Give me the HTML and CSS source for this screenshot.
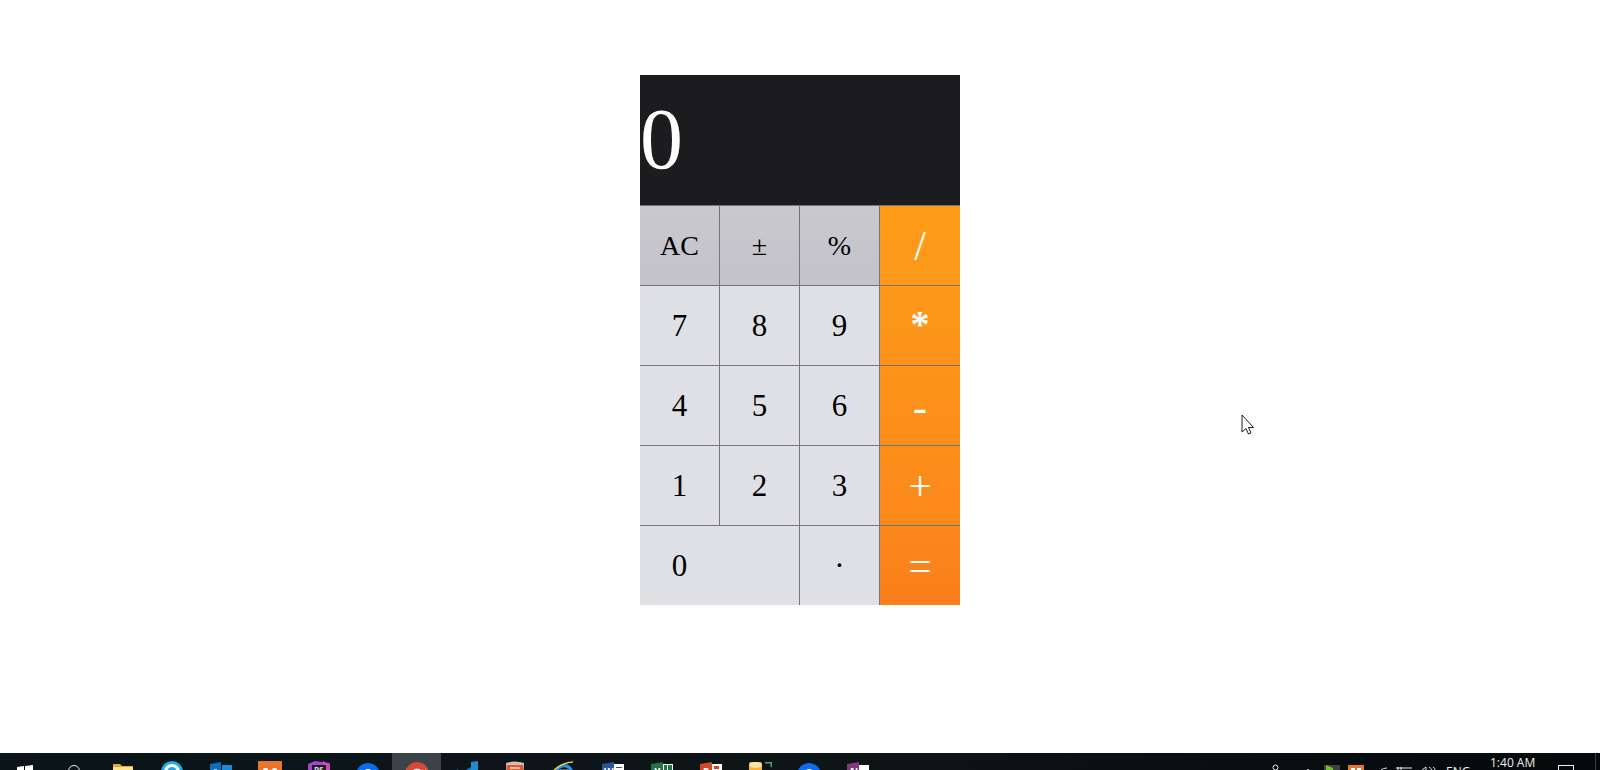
FILE: index.html
```html
<!DOCTYPE html>
<html>

<head>
    <link rel="stylesheet" href="styles.css">
</head>

<body>
    <div class="page">
        <div class="calculator">
            <div class="display">0</div>
            <div class="keys">
                <button class="key fn">AC</button>
                <button class="key fn">±</button>
                <button class="key fn">%</button>
                <button class="key op op-1">/</button>
                <button class="key">7</button>
                <button class="key">8</button>
                <button class="key">9</button>
                <button class="key op op-2">*</button>
                <button class="key">4</button>
                <button class="key">5</button>
                <button class="key">6</button>
                <button class="key op op-3">-</button>
                <button class="key">1</button>
                <button class="key">2</button>
                <button class="key">3</button>
                <button class="key op op-4">+</button>
                <button class="key zero">0</button>
                <button class="key">·</button>
                <button class="key op op-5">=</button>
            </div>
        </div>
        <svg class="cursor" width="14" height="22" viewBox="0 0 14 22">
            <path d="M1 1V18L5 14.500L7.500 20L10 19L7.500 13.500H12.500Z" fill="#fff" stroke="#1a1a2a"/>
        </svg>
    </div>

    <div class="taskbar">
        <div class="slot">
            <svg width="24" height="24" viewBox="0 0 24 24">
                <path d="M4 6L11 5V24H4zM12 5L20 4V24H12z" fill="#fff"/>
            </svg>
        </div>
        <div class="slot">
            <svg width="24" height="24" viewBox="0 0 24 24">
                <circle cx="12" cy="10" r="5.500" fill="none" stroke="#eee"/>
            </svg>
        </div>
        <div class="slot">
            <svg width="24" height="24" viewBox="0 0 24 24">
                <path d="M2 3H9L11 5H22V24H2z" fill="#d9a93c"/>
                <path d="M2 6H22V24H2z" fill="#fde38c"/>
            </svg>
        </div>
        <div class="slot">
            <svg width="24" height="24" viewBox="0 0 24 24">
                <circle cx="12" cy="11" r="11" fill="#16b1ee"/>
                <circle cx="12" cy="11" r="8" fill="#fff"/>
                <circle cx="12" cy="11" r="5" fill="#2a9fd8"/>
            </svg>
        </div>
        <div class="slot">
            <svg width="24" height="24" viewBox="0 0 24 24">
                <path d="M13 4H23V24H13z" fill="#1c8ad6"/>
                <path d="M1 3L12 1V24L1 22z" fill="#0a6fc0"/>
                <circle cx="6.500" cy="11" r="2.500" fill="none" stroke="#fff"/>
            </svg>
        </div>
        <div class="slot">
            <svg width="24" height="24" viewBox="0 0 24 24">
                <rect y="0" width="24" height="24" rx="1" fill="#e9752d"/>
                <circle cx="7.500" cy="10" r="3" fill="#fff"/>
                <circle cx="16.500" cy="10" r="3" fill="#fff"/>
                <circle cx="7.500" cy="10" r="1" fill="#e9752d"/>
                <circle cx="16.500" cy="10" r="1" fill="#e9752d"/>
            </svg>
        </div>
        <div class="slot">
            <svg width="24" height="24" viewBox="0 0 24 24">
                <path d="M1 3L8 0L23 2V24H1z" fill="#a73fd0"/>
                <path d="M16 0L23 4V12H16z" fill="#d24bb5"/>
                <rect x="5" y="4" width="14" height="16" fill="#1d1d1f"/>
                <text class="icon-text" x="7" y="11.500">PS</text>
            </svg>
        </div>
        <div class="slot">
            <svg width="24" height="24" viewBox="0 0 24 24">
                <circle cx="12" cy="14" r="12" fill="#0a6cf0"/>
                <circle cx="12" cy="12" r="4" fill="#fff"/>
            </svg>
        </div>
        <div class="slot active">
            <svg width="24" height="24" viewBox="0 0 24 24">
                <circle cx="12" cy="13" r="12" fill="#d8483a"/>
                <path d="M1 18L3 8L8 12z" fill="#3fa34d"/>
                <path d="M23 18L21 8L16 12z" fill="#f6c22d"/>
                <circle cx="12" cy="13" r="5.500" fill="#fff"/>
                <circle cx="12" cy="13" r="4.500" fill="#4a8cf0"/>
            </svg>
        </div>
        <div class="slot">
            <svg width="24" height="24" viewBox="0 0 24 24">
                <path d="M17 1L24 0V24H17z" fill="#1f8ad2"/>
                <path d="M17 6V10L8 16L1 11L3 8L8 11z" fill="#1a76b8"/>
            </svg>
        </div>
        <div class="slot">
            <svg width="24" height="24" viewBox="0 0 24 24">
                <path d="M3 2Q12 -1 21 2L20 24H4z" fill="#c9c2b6"/>
                <path d="M4 4H20V24H4z" fill="#e8562c"/>
                <path d="M7 6H17V8H7z" fill="#f4c0a8"/>
            </svg>
        </div>
        <div class="slot">
            <svg width="24" height="24" viewBox="0 0 24 24">
                <circle cx="12" cy="12" r="7.500" fill="none" stroke="#2c8ee0" stroke-width="3.500"/>
                <path d="M2 9Q12 1 21 1" fill="none" stroke="#f3c53a" stroke-width="1.500"/>
                <path d="M8 9H16" stroke="#8fd0f0"/>
            </svg>
        </div>
        <div class="slot">
            <svg width="24" height="24" viewBox="0 0 24 24">
                <path d="M12 3H23V24H12z" fill="#fff"/>
                <path d="M15 6H21V7H15zM15 9H21V10H15z" fill="#2b579a"/>
                <path d="M1 3L13 1V24L1 22z" fill="#2b579a"/>
                <text class="icon-text letter" x="3" y="15">W</text>
            </svg>
        </div>
        <div class="slot">
            <svg width="24" height="24" viewBox="0 0 24 24">
                <path d="M12 3H23V24H12z" fill="#fff"/>
                <path d="M14 4H17V9H14zM18 4H22V9H18z" fill="#217346"/>
                <path d="M1 3L13 1V24L1 22z" fill="#217346"/>
                <text class="icon-text letter" x="4" y="15">X</text>
            </svg>
        </div>
        <div class="slot">
            <svg width="24" height="24" viewBox="0 0 24 24">
                <path d="M12 3H23V24H12z" fill="#fff"/>
                <path d="M15 5H20V8H15z" fill="#d24726"/>
                <path d="M1 3L13 1V24L1 22z" fill="#d24726"/>
                <text class="icon-text letter" x="4" y="15">P</text>
            </svg>
        </div>
        <div class="slot">
            <svg width="24" height="24" viewBox="0 0 24 24">
                <rect x="1" y="1" width="13" height="23" rx="2" fill="#f5b33c"/>
                <ellipse cx="7.500" cy="4" rx="6.500" ry="3" fill="#fbe2a0"/>
                <path d="M17 1H24V6H22.500V2.500H17z" fill="#5c9a66"/>
            </svg>
        </div>
        <div class="slot">
            <svg width="24" height="24" viewBox="0 0 24 24">
                <circle cx="12" cy="14" r="12" fill="#0a6cf0"/>
                <circle cx="12" cy="12" r="4" fill="#fff"/>
            </svg>
        </div>
        <div class="slot">
            <svg width="24" height="24" viewBox="0 0 24 24">
                <path d="M12 4H23V24H12z" fill="#fff"/>
                <path d="M1 3L13 1V24L1 22z" fill="#80397b"/>
                <text class="icon-text letter" x="4" y="15">N</text>
            </svg>
        </div>

        <div class="tray">
            <svg class="tray-icons" width="164" height="17" viewBox="0 0 164 17">
                <circle cx="3.500" cy="14.500" r="2.500" fill="none" stroke="#eee"/>
                <rect x="35" y="16" width="2" height="1" fill="#aaa"/>
                <rect x="52" y="12" width="16" height="5" fill="#3d4042"/>
                <path d="M54 12L61 15V17H54z" fill="#6fc02c"/>
                <rect x="76" y="12" width="16" height="5" fill="#e9752d"/>
                <rect x="79" y="15" width="4" height="2" fill="#fff"/>
                <rect x="85" y="15" width="4" height="2" fill="#fff"/>
                <path d="M109 17Q111 15 115 15" fill="none" stroke="#ddd"/>
                <path d="M124 15H140M126 14V17M129 14V17" fill="none" stroke="#eee"/>
                <path d="M150 17L154 14V17M157 14Q159 15 160 17M161 14Q163 15 163 17" fill="none" stroke="#ddd"/>
            </svg>
            <div class="lang">ENG</div>
            <div class="clock">1:40 AM</div>
            <div class="notify"></div>
            <div class="show-desktop"></div>
        </div>
    </div>
</body>

</html>
```

FILE: styles.css
```css
body {
    margin: 0;
    background-color: #fff;
    font-family: "Liberation Serif", serif;
    overflow: hidden;
}

.page {
    position: relative;
    height: 753px;
    padding-top: 75px;
    box-sizing: border-box;
}

.calculator {
    width: 320px;
    margin: 0 auto;
}

.display {
    height: 130px;
    box-sizing: border-box;
    padding-top: 14px;
    background-color: #1c1b1e;
    color: #fff;
    font-size: 86px;
    line-height: 100px;
}

.keys {
    display: grid;
    grid-template-columns: repeat(4, 80px);
    grid-auto-rows: 80px;
}

.key {
    padding: 0;
    border: none;
    border-top: 1px solid #757575;
    border-right: 1px solid #757575;
    background-color: #dfe0e5;
    color: #000;
    font-family: inherit;
    font-size: 31px;
}

.fn {
    background: linear-gradient(#c9c9cb, #c3c2cc);
    font-size: 28px;
}

.zero {
    grid-column: span 2;
    padding-right: 80px;
}

.op {
    border-right: none;
    color: #fff;
    font-size: 42px;
}

.op-1 {
    background: linear-gradient(#fe9c19, #fd9819);
}

.op-2 {
    background: linear-gradient(#fd9819, #fd9319);
    padding-bottom: 4px;
    font-weight: bold;
    font-size: 38px;
}

.op-3 {
    background: linear-gradient(#fd9319, #fc8e1a);
    padding-top: 2px;
}

.op-4 {
    background: linear-gradient(#fc8e1a, #fb881b);
}

.op-5 {
    background: linear-gradient(#fb881b, #fa7e1c);
}

.cursor {
    position: absolute;
    left: 1241px;
    top: 414px;
}

.taskbar {
    display: flex;
    height: 17px;
    overflow: hidden;
    background: linear-gradient(to right, #0a1419, #0e1517 50%, #04090c);
    font-family: "Open Sans", sans-serif;
    color: #eee;
}

.slot {
    flex: none;
    width: 49px;
    height: 17px;
    padding-top: 8px;
    box-sizing: border-box;
    text-align: center;
}

.active {
    background-color: #3c4347;
}

.icon-text {
    fill: #ddd;
    font-size: 8px;
    font-weight: bold;
}

.letter {
    fill: #fff;
    font-size: 10px;
}

.tray {
    display: flex;
    flex: 1;
    justify-content: flex-end;
}

.tray-icons {
    flex: none;
    margin-right: 10px;
}

.lang {
    width: 44px;
    padding-top: 12px;
    font-size: 12px;
    line-height: 14px;
}

.clock {
    width: 68px;
    padding-top: 2px;
    font-size: 12px;
    line-height: 16px;
}

.notify {
    flex: none;
    width: 16px;
    height: 16px;
    margin-top: 12px;
    border: 1px solid #eee;
    box-sizing: border-box;
}

.show-desktop {
    flex: none;
    width: 4px;
    margin-left: 21px;
    border-left: 1px solid #3a3f42;
}
```
